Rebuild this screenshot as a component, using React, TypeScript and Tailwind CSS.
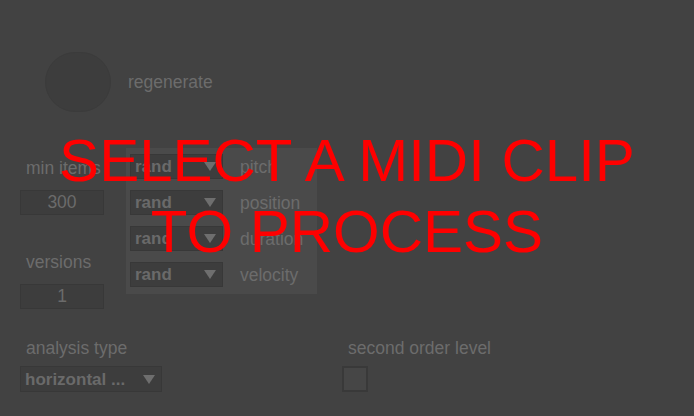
const font = { fontFamily: '"Liberation Sans", Arial, sans-serif' };

function Caret({ className = "" }: { className?: string }) {
  return (
    <svg width="12" height="9" viewBox="0 0 12 9" className={className}>
      <path d="M0 0 L12 0 L6 9 Z" fill="#6e6e6e" />
    </svg>
  );
}

function Menu({ label, width = "w-[93px]" }: { label: string; width?: string }) {
  return (
    <div
      className={`${width} h-[25px] flex items-center justify-between pl-[4px] pr-[6px] bg-[#3d3d3d] border border-[#383838] text-[17px] font-bold text-[#6a6a6a] leading-none`}
    >
      <span className="truncate">{label}</span>
      <Caret />
    </div>
  );
}

function NumBox({ value }: { value: string }) {
  return (
    <div className="w-[84px] h-[25px] flex items-center justify-center bg-[#3d3d3d] border border-[#383838] text-[17.5px] text-[#6b6b6b] leading-none">
      {value}
    </div>
  );
}

const rows = ["pitch", "position", "duration", "velocity"];

export default function App() {
  return (
    <div className="relative w-[694px] h-[416px] overflow-hidden bg-[#424242] text-[#6c6c6c]" style={font}>
      {/* Regenerate */}
      <div className="flex items-center pt-[52px] pl-[45px] gap-[17px]">
        <div className="w-[66px] h-[60px] rounded-full bg-[#3d3d3d] border border-[#3b3b3b]" />
        <span className="text-[17.5px] leading-[20px]">regenerate</span>
      </div>

      {/* Counts + randomisation panel */}
      <div className="flex pl-[20px] mt-[36px]">
        <div className="w-[84px] flex flex-col">
          <span className="mt-[10px] pl-[6px] text-[17.5px] leading-[20px] whitespace-nowrap">min items</span>
          <div className="mt-[12px]">
            <NumBox value="300" />
          </div>
          <span className="mt-[37px] pl-[6px] text-[17.5px] leading-[20px]">versions</span>
          <div className="mt-[12px]">
            <NumBox value="1" />
          </div>
        </div>

        <div className="ml-[22px] w-[191px] h-[146px] bg-[#4a4a4a] pt-[6px] pl-[4px] flex flex-col gap-[11px]">
          {rows.map((r) => (
            <div key={r} className="flex items-center gap-[17px]">
              <Menu label="rand" />
              <span className="text-[17.5px] leading-[20px]">{r}</span>
            </div>
          ))}
        </div>
      </div>

      {/* Analysis settings */}
      <div className="flex pl-[20px] mt-[29px]">
        <div className="w-[322px] flex flex-col">
          <span className="pl-[6px] text-[17.5px] leading-[20px]">analysis type</span>
          <div className="mt-[8px]">
            <Menu label="horizontal ..." width="w-[142px] h-[26px]" />
          </div>
        </div>
        <div className="flex flex-col">
          <span className="pl-[6px] text-[17.5px] leading-[20px]">second order level</span>
          <div className="mt-[8px] w-[26px] h-[26px] bg-[#464646] border-2 border-[#393939]" />
        </div>
      </div>

      {/* Overlay */}
      <div className="absolute left-0 right-0 top-[125px] text-center text-[#ff0000] text-[60px] leading-[71px]">
        SELECT A MIDI CLIP
        <br />
        TO PROCESS
      </div>
    </div>
  );
}
